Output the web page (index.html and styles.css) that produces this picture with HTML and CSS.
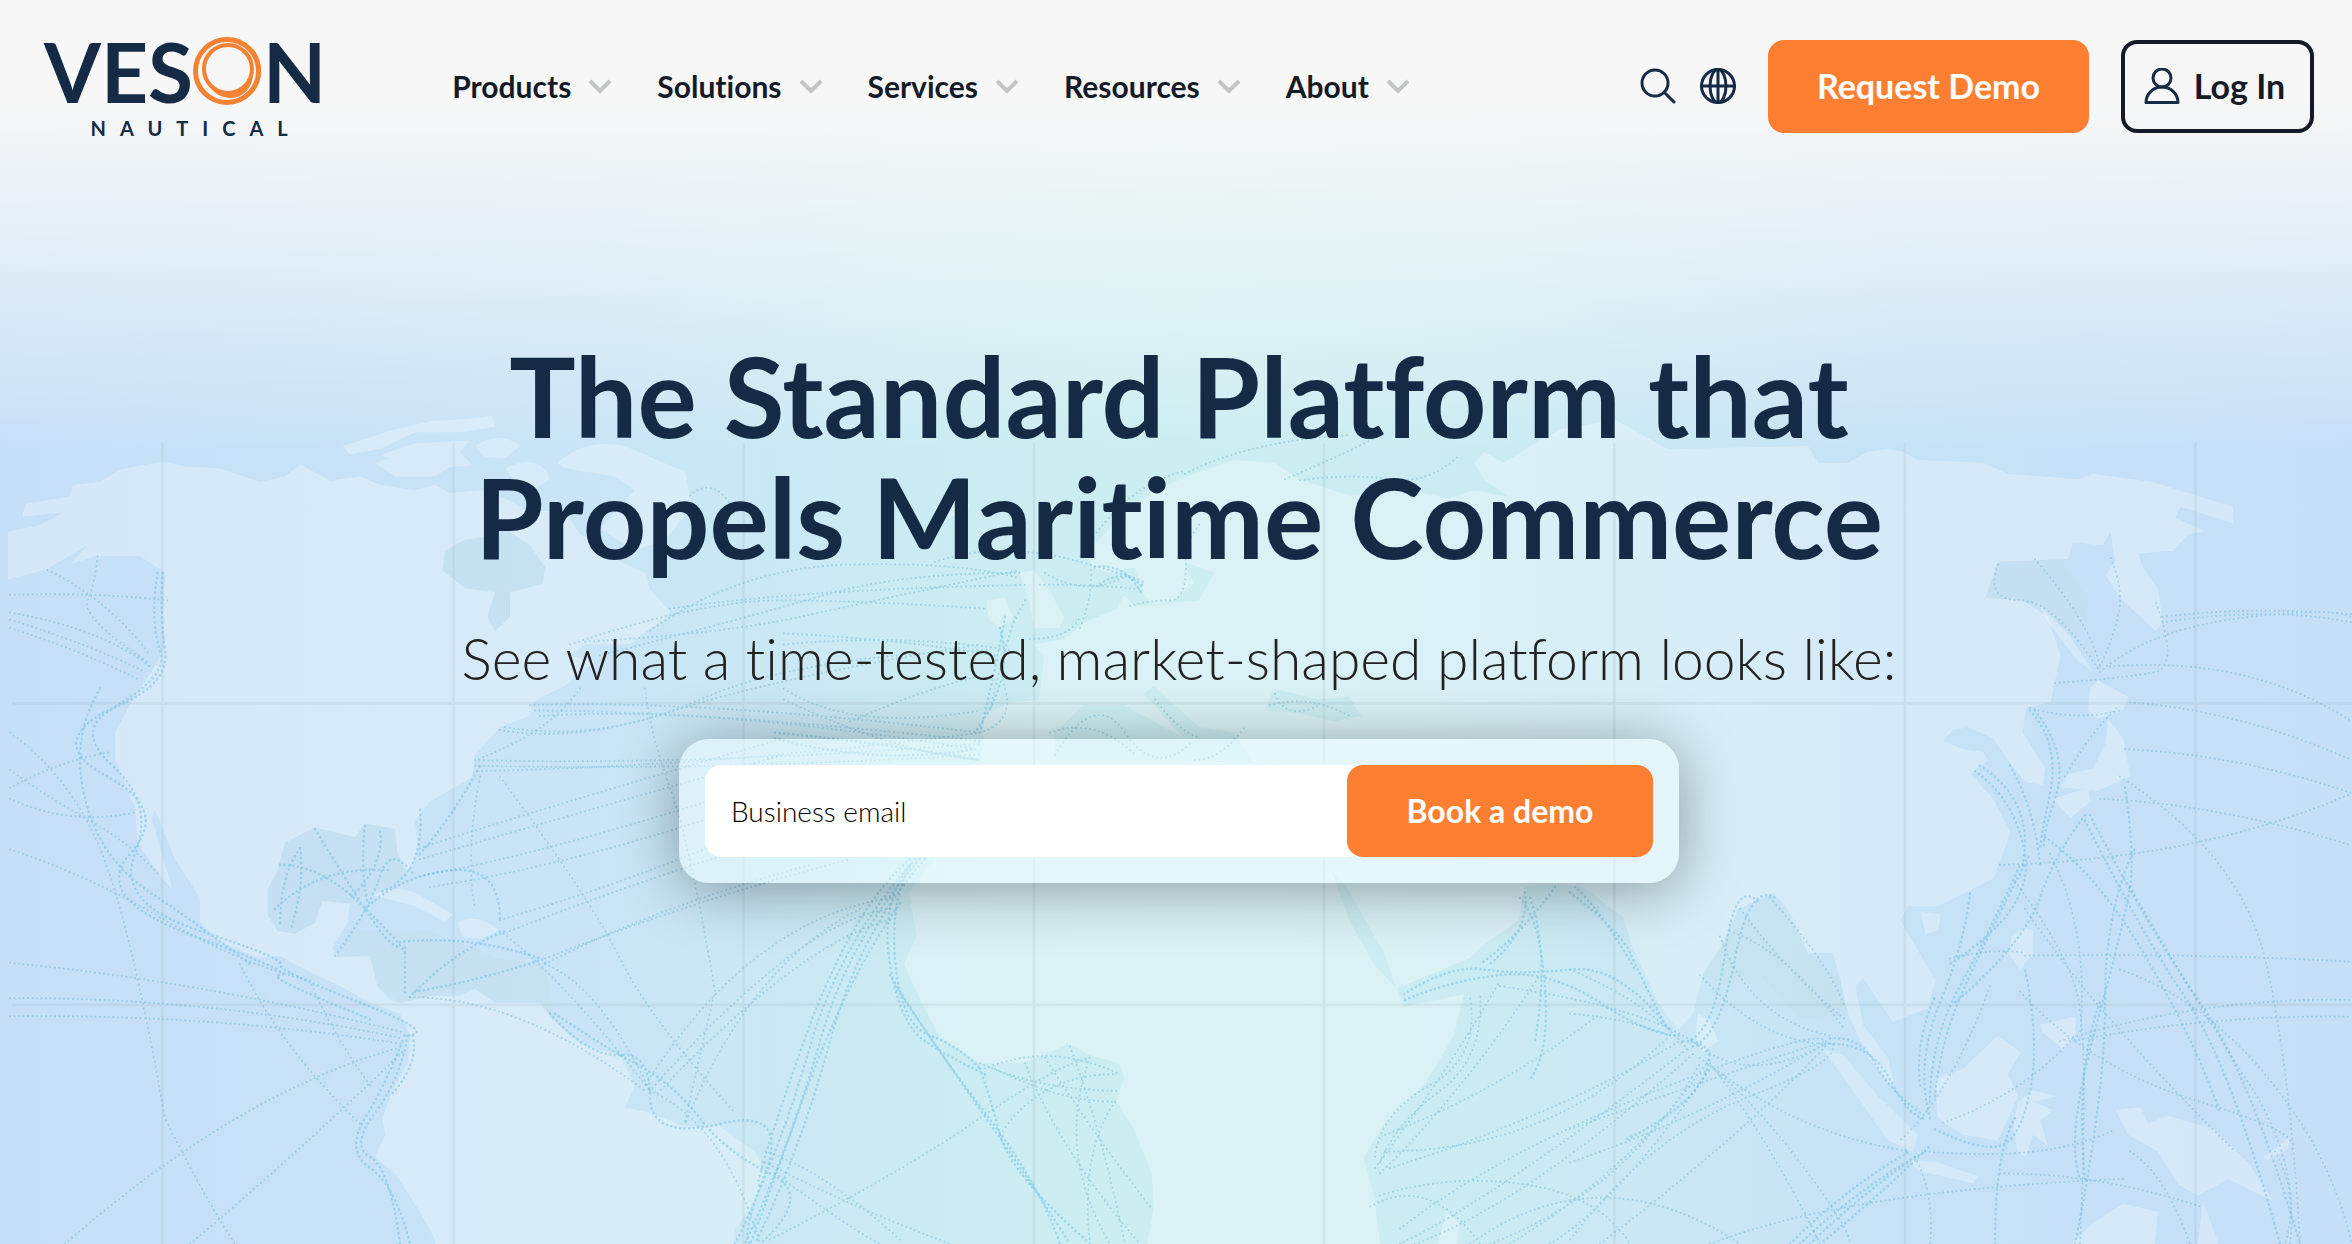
FILE: index.html
```html
<!DOCTYPE html>
<html lang="en">
<head>
  <meta charset="UTF-8">
  <meta name="viewport" content="width=device-width, initial-scale=1">
  <title>Veson Nautical</title>
  <link rel="stylesheet" href="styles.css">
</head>
<body>
  <div class="page">
    <!-- world map with shipping routes -->
    <svg class="map" viewBox="0 0 2352 1244" preserveAspectRatio="xMidYMin slice" aria-hidden="true">
      <g transform="translate(0 380) scale(.5 .551)">
        <path class="land" fill-rule="evenodd" d="M16 275L75 265L130 240L45 248L50 225L138 212L146 190L200 185L240 162L325 148L370 157L440 160L520 185L570 175L600 153L660 183L720 175L760 190L830 200L870 190L900 205L960 200L1010 215L1050 235L1130 240L1160 280L1200 300L1240 330L1290 350L1300 380L1340 420L1330 435L1300 450L1260 480L1170 480L1140 500L1190 510L1130 555L1065 585L1060 610L1000 630L950 680L945 720L860 765L830 800L835 850L818 900L795 860L790 815L730 805L710 830L630 812L570 840L555 890L535 925L535 970L555 1000L590 1005L630 985L645 945L700 950L695 985L665 1030L675 1047L740 1045L755 1100L780 1125L800 1130L860 1118L920 1118L950 1105L990 1130L1080 1130L1110 1165L1160 1205L1240 1225L1270 1280L1250 1320L1300 1330L1370 1355L1440 1355L1510 1400L1530 1440L1510 1490L1470 1540L1462 1600L870 1600L870 1560L840 1510L790 1440L750 1410L770 1370L765 1340L785 1290L815 1240L820 1190L800 1150L740 1130L680 1100L620 1075L560 1045L520 1050L440 1020L400 985L400 940L350 870L310 780L303 795L345 925L320 900L275 840L270 775L230 690L230 640L265 580L310 520L330 480L325 440L330 350L280 320L190 320L140 335L175 300L90 345L16 362Z
          M890 310L930 290L970 285L1000 265L1060 300L1090 340L1085 370L1020 385L1020 430L990 455L975 430L990 385L930 378L885 345Z"/>
        <path class="bay" d="M890 310L930 290L970 285L1000 265L1060 300L1090 340L1085 370L1020 385L1020 430L990 455L975 430L990 385L930 378L885 345Z
          M570 840L630 812L710 830L730 805L790 815L795 860L818 900L740 935L700 950L645 945L630 985L590 1005L555 1000L535 970L535 925L555 890Z
          M700 1000L860 1000L1000 1050L1090 1060L1110 1165L1080 1130L990 1130L950 1105L860 1118L800 1130L755 1100L740 1045L675 1047Z
          M3406 1080L3446 1020L3546 930L3616 1040L3681 1090L3696 1150L3600 1160L3520 1080L3450 1100Z
          M3971 395L3996 330L4120 325L4180 400L4150 470L4096 430L4046 400Z"/>
        <path class="land" d="M745 935Q800 910 850 940L905 970L890 983L830 955ZM915 985Q950 965 1000 998L960 1015L925 1010Z
          M685 120L780 92L860 75L940 70L985 65L990 85L920 95L830 95L760 125L700 135ZM750 150L780 142L760 136L830 115L940 110L920 130L945 155L900 158L870 175L790 175Z
          M950 120Q1000 90 1040 120L1010 142L970 140ZM1010 160Q1080 130 1100 180L1050 210Z
          M1115 150Q1170 105 1250 120L1340 155L1370 165L1385 230L1330 290L1270 310L1200 270L1270 200L1230 175L1130 160Z
          M1868 230L1900 218L1940 225L1930 245L1880 248Z
          M1973 400L2008 395L2028 430L1998 450L1978 435ZM2038 350L2068 345L2098 380L2128 430L2118 450L2068 450L2058 400Z"/>
        <path class="land" fill-rule="evenodd" d="M1968 610L1963 690L1868 870L1818 930L1833 1010L1808 1060L1843 1130L1878 1190L1958 1240L2048 1240L2138 1205L2178 1225L2238 1240L2248 1265L2233 1310L2268 1360L2303 1440L2308 1500L2288 1600L2765 1600L2748 1480L2728 1410L2768 1350L2848 1280L2908 1190L2928 1115L2808 1137L2793 1105L2938 1050L2968 1025L3038 980L3048 920L3108 915L3166 920L3246 975L3266 1030L3316 1130L3356 1180L3386 1150L3406 1080L3446 1020L3476 960L3546 930L3576 960L3616 1040L3666 1040L3681 1090L3696 1150L3736 1230L3791 1290L3776 1230L3726 1170L3711 1100L3726 1085L3786 1165L3856 1140L3871 1090L3826 1020L3801 980L3816 955L3876 955L3986 905L4006 860L4021 820L3986 760L3941 715L3976 690L3966 675L3926 670L3886 655L3906 635L3936 630L3986 650L4016 690L4051 730L4086 735L4091 705L4046 640L4051 595L4101 585L4121 500L4096 430L4046 400L3971 395L3996 330L4136 325L4146 295L4206 300L4221 275L4230 330L4211 355L4246 400L4311 455L4326 440L4316 380L4286 340L4276 315L4346 310L4376 280L4411 275L4351 250L4361 230L4466 260L4466 230L4376 205L4306 185L4186 170L4156 180L4016 170L3966 150L3836 145L3806 130L3776 125L3736 130L3696 150L3636 150L3616 120L3336 125L3230 72L3120 90L3060 120L3008 150L2968 130L2948 150L2968 180L3018 212L2948 200L2898 215L2820 200L2700 210L2598 180L2548 150L2468 145L2388 170L2308 200L2228 260L2178 310L2183 340L2218 350L2268 340L2288 390L2308 410L2348 400L2388 370L2368 330L2428 350L2398 400L2268 410L2248 390L2233 415L2168 440L2128 470L2068 480L2088 500L2078 580L2018 585Z
          M2108 640L2168 590L2248 590L2368 650L2288 570L2308 555L2398 630L2468 640L2508 695L2328 690L2108 690Z
          M2528 600L2548 560L2638 580L2698 575L2723 610L2668 620L2598 605Z
          M2640 866L2693 920L2718 960L2768 1040L2793 1105L2748 1060L2698 980L2663 890Z"/>
        <path class="land" d="M4076 405L4136 460L4186 530L4156 510L4096 440ZM4181 560L4196 545L4256 575L4246 600L4196 615L4176 600Z
          M4216 615L4246 650L4261 720L4196 745L4121 740L4136 715L4186 705L4211 660ZM4106 760L4176 740L4181 765L4141 795Z
          M3841 965L3881 970L3876 1000L3851 1005ZM4026 1005Q4050 990 4066 1000L4066 1040L4041 1070L4016 1040Z
          M4081 1170L4151 1155L4151 1190L4126 1215L4086 1185ZM3396 1150L3421 1165L3436 1200L3406 1220L3391 1190Z
          M3646 1215L3686 1225L3756 1300L3836 1370L3826 1400L3776 1380L3706 1290ZM3816 1415L3876 1420L3956 1445L3946 1458L3836 1435Z
          M3871 1270L3926 1250L3996 1190L4041 1220L4016 1260L4036 1300L3996 1380L3926 1370L3876 1340Z
          M4026 1360L4036 1310L4066 1290L4116 1300L4066 1310L4106 1325L4081 1345L4096 1390L4066 1370L4051 1410L4036 1400Z
          M4231 1325L4281 1320L4296 1350L4336 1335L4426 1360L4496 1420L4546 1490L4456 1450L4396 1480L4356 1460L4316 1400L4256 1370ZM4526 1410L4578 1375L4576 1395L4536 1415Z
          M4106 1600L4186 1530L4246 1495L4316 1510L4306 1600ZM4391 1600L4406 1490L4450 1600ZM2865 1600L2893 1510L2918 1530L2913 1600Z"/>
        <path class="grid" d="M325 115V1600M907 115V1600M1487 115V1600M2068 115V1600M2648 115V1600M3229 115V1600M3810 115V1600M4391 115V1600M24 587H4704M24 1134H4704"/>
        <!-- Pacific, west side -->
        <path class="route" d="M20 390Q180 385 335 400M20 422Q200 450 300 520M20 435Q180 480 290 530M20 450Q160 490 280 545M95 345Q220 400 300 500M195 320Q190 370 175 400T300 515
          M20 740Q120 690 225 675M20 708Q100 760 180 800T320 900M20 640Q140 720 200 850T330 1340Q400 1470 470 1568M20 760Q140 810 270 785M20 852Q180 900 330 980T620 1090
          M20 1058Q400 1090 810 1185M20 1122Q420 1120 805 1195M20 1155Q420 1150 805 1205M130 1568Q480 1290 805 1210M380 1568Q600 1400 810 1215M480 1060Q560 1210 720 1350M620 1090Q660 1180 740 1280"/>
        <path class="route coast" d="M325 350Q320 430 330 490T240 590T225 700T270 860T400 1000T560 1060T720 1130T805 1190M315 350Q300 440 320 490T215 600T215 720T260 860T390 1010T560 1080T740 1160M200 560Q140 650 170 760T300 930T500 1060
          M815 1190Q800 1270 750 1330T740 1410T800 1568M805 1200Q770 1280 730 1340T740 1430T820 1568M825 1190Q840 1240 780 1300"/>
        <!-- Caribbean and Gulf -->
        <path class="route coast" d="M600 850Q560 900 560 990M600 850Q610 920 580 1000M560 880Q640 880 720 950T810 1040M630 815Q680 890 730 960T800 1030M730 810Q720 880 735 950M760 820Q770 880 700 940
          M670 1045Q740 960 760 900T830 900M810 1030V1120M800 1020Q900 1010 1000 1030T1090 1060M730 960Q800 900 900 890T1000 980M840 780Q850 900 760 930M550 960Q640 880 780 890
          M820 1120Q900 1040 1010 1000M830 1110Q960 1090 1090 1050M840 860Q900 800 960 700"/>
        <path class="route" d="M840 850Q1000 800 1568 650M840 870Q1100 800 1568 680M840 900Q1100 860 1568 720M860 920Q1160 880 1568 750M1000 980Q1300 900 1568 790M1020 1000Q1300 900 1568 830M1090 1060Q1300 960 1620 880M1090 1050Q1400 940 1700 870
          M1000 720Q1180 940 1240 1050T1470 1330M960 720Q930 860 950 960M1000 1000Q1120 1080 1300 1290M1090 1060Q1200 1100 1300 1290M820 1120Q1040 1120 1290 1290M1160 560Q1100 640 950 690M1290 560Q1300 640 1340 740T1430 1110Q1380 1300 1370 1350"/>
        <!-- North Atlantic -->
        <path class="route" d="M950 690Q1400 700 1963 660M950 700Q1400 710 1960 680M955 710Q1450 700 1963 640M1000 635Q1150 660 1350 600T1960 480M1010 630Q1200 660 1400 580T1980 490M1060 590Q1400 580 1960 640M1070 600Q1400 600 1960 655M1080 610Q1400 590 1950 670
          M1140 480Q1400 400 1560 400T1970 415M1170 475Q1450 460 1600 430T2040 345M1300 455Q1480 340 1700 335T2040 360M1340 415Q1600 380 2050 372M1200 500Q1500 430 1650 390T2040 350M1568 460Q1800 470 1990 500M1568 480Q1800 460 2020 490M1380 210Q1430 170 1470 240
          M1870 330Q2000 290 2160 330T2280 370M2080 372Q2180 370 2280 380M2090 350Q2180 400 2260 350M2050 400Q1990 500 2010 560T1960 640M2030 430Q2000 520 1980 600M2160 450Q2190 380 2180 330M2060 470Q2140 470 2160 430M2260 410Q2300 400 2340 400T2370 300L2400 260
          M1568 580Q1800 680 1965 690M1568 560Q1700 640 1960 600M1700 620Q1850 560 1950 540M2160 320Q2250 190 2370 165M2370 170Q2500 110 2700 100M2570 180Q2700 130 2760 100M2600 182Q2700 170 2780 180T2920 135"/>
        <path class="route coast" d="M2010 430Q1990 530 1960 640M2000 450Q2030 540 1950 640M1550 640Q1780 660 1960 690M1550 650Q1750 700 1950 670M2190 340Q2250 330 2285 390M2200 370Q2250 340 2285 375"/>
        <!-- South Atlantic -->
        <path class="route coast" d="M1830 870Q1780 930 1790 1050T1860 1190T1960 1250M1820 880Q1760 950 1780 1060T1850 1200T1970 1260M1960 1250Q1980 1300 2000 1370T2180 1568M1780 1080Q1860 1200 1970 1330T2120 1568M1790 1100Q1880 1220 1980 1350T2140 1568
          M1840 870Q1700 1010 1640 1200T1490 1568M1830 870Q1680 1020 1620 1210T1470 1568M1850 870Q1720 1000 1660 1200T1510 1568M1820 870Q1700 960 1600 1220T1520 1460M1800 950Q1690 1090 1600 1320T1500 1568
          M1100 1150Q1180 1230 1240 1225T1300 1300T1440 1350T1530 1440T1500 1568M1110 1150Q1190 1200 1270 1240T1400 1340T1540 1440T1520 1568"/>
        <path class="route" d="M1780 960Q1600 980 1300 1290M1780 980Q1600 1020 1310 1300M1780 940Q1500 980 1290 1280M1720 960Q1500 1060 1370 1350M1300 1290Q1450 1350 1520 1568M1800 1560Q1640 1430 1530 1400M1530 1420Q1700 1500 1900 1568M1550 1440Q1700 1540 1760 1568M1540 1560Q1800 1440 1960 1340T2180 1230
          M1970 1250Q2100 1200 2240 1260M1960 1240Q2080 1290 2240 1290M1990 1250Q2120 1310 2230 1310M2050 1240Q2120 1400 2280 1568M2090 1230Q2180 1360 2300 1500M2140 1210Q2200 1350 2250 1568M2180 1230Q2110 1400 2220 1568M2000 1370Q2080 1260 2230 1260M2230 1310Q2160 1400 2180 1568"/>
        <!-- Mediterranean and Black Sea -->
        <path class="route" d="M2100 640Q2190 610 2270 680M2110 680Q2190 560 2250 640T2380 660M2310 580Q2360 640 2400 650M2390 690Q2440 690 2490 630M2540 590Q2620 570 2700 610M2550 570Q2570 620 2640 590"/>
        <!-- Indian Ocean -->
        <path class="route coast" d="M2808 1115Q2900 1060 2970 1070T3140 1070T3340 1180M2810 1125Q2900 1090 3000 1080T3200 1130T3360 1190M3040 940Q3080 980 3090 1100T3060 1270M3060 940Q3100 1040 3070 1200M3050 930Q3060 1000 2980 1060M3110 920Q3040 1010 2960 1060
          M3376 1200Q3430 1180 3450 1040T3520 950M3386 1210Q3440 1190 3470 1050T3550 940M3140 930Q3240 1000 3260 1040T3330 1170M3150 920Q3200 960 3270 1070M3660 1195Q3720 1190 3750 1240T3840 1330M3650 1205Q3740 1200 3780 1270T3850 1340M3366 1200Q3440 1200 3410 1260T3250 1380"/>
        <path class="route" d="M2750 1410Q2760 1330 2860 1280T2940 1120M2760 1420Q2790 1350 2880 1290T2960 1110M2750 1430Q2900 1250 3000 1090M2760 1440Q2920 1300 3080 1080M2770 1400Q3100 1400 3340 1190M2780 1430Q3100 1340 3360 1200M2770 1370Q3000 1290 3200 1150M2800 1568Q3000 1480 3380 1210M2830 1568Q3060 1490 3390 1220
          M2980 1568Q3260 1470 3400 1240M3020 1568Q3280 1420 3420 1230M3100 1568Q3240 1490 3420 1250M2800 1540Q3000 1400 3340 1280T3650 1210M3140 1360Q3350 1290 3650 1200M3140 1420Q3400 1340 3650 1205M3420 1240Q3540 1380 3640 1568M3400 1230Q3500 1300 3600 1420T3700 1568M3430 1250Q3600 1370 3820 1400
          M3000 1100Q3300 1140 3400 1210T3650 1205M3400 1080Q3520 1200 3650 1205M3440 1010Q3500 1160 3660 1190M3460 1000Q3580 1040 3690 1180M3480 960Q3580 1080 3690 1160M3540 940Q3660 1060 3690 1140M3140 1070Q3300 1130 3380 1220M2940 1568Q3200 1400 3480 1568M2740 1500Q2860 1440 2960 1568M2760 1480Q2900 1440 3050 1460T3260 1568
          M3200 1568Q3500 1360 3660 1200M3420 1568Q3700 1470 4250 1450M3140 1560Q3300 1370 3500 1300T3660 1200M3140 1150Q3260 1160 3340 1190"/>
        <path class="route coast" d="M3600 1568Q3700 1480 3830 1410M3620 1568Q3730 1470 3850 1400M3580 1568Q3700 1460 3820 1400M3640 1568Q3760 1480 3860 1390"/>
        <!-- South China Sea, Japan and West Pacific -->
        <path class="route coast" d="M3860 1340Q3830 1240 3880 1130T3940 930M3860 1310Q3860 1200 3920 1100T4040 880M3870 1300Q3880 1200 3930 1100T4060 860M3840 1280Q3830 1200 3870 1120M3950 710Q4030 760 4050 860T3900 1060M3960 700Q4080 770 4040 900M4020 700Q4070 780 4080 880
          M4060 600Q4120 660 4100 750T4080 850M4070 600Q4140 680 4110 760T4090 850M4170 790Q4110 860 4080 940T3910 1130M4180 790Q4300 1000 4400 1130T4600 1568M4170 800Q4280 1000 4370 1120T4560 1568M4250 740Q4270 860 4260 920T4190 1180T4160 1450M4090 830Q4200 900 4300 1060T4440 1330
          M4150 1568Q4210 1300 4210 1130T4270 850M4170 1450Q4150 1250 4200 1130M3870 1360Q3960 1400 4000 1390T4060 1290T4050 1070M3990 1568Q3990 1400 4030 1340"/>
        <path class="route" d="M3996 335Q3970 400 4040 400T4200 530M4070 325Q4180 440 4200 520M4200 520Q4240 440 4240 400T4220 320M4200 530Q4300 450 4500 430T4704 435M4325 430Q4500 410 4704 425M4325 440Q4540 410 4704 440M4110 550Q4260 540 4310 530T4310 400M4220 520Q4500 500 4704 620M4260 585Q4480 600 4704 690
          M4250 670Q4480 680 4704 750M4060 595Q4150 620 4240 600M4130 720Q4180 640 4240 590M4200 760Q4440 770 4704 845M4000 880Q4400 870 4704 750M4240 720Q4480 860 4530 1050T4600 1568M4050 1045Q4400 1040 4704 1056M4120 1200Q4400 1120 4704 1125M4140 1200Q4440 1150 4704 1156
          M4050 960Q4200 1160 4470 1400M4240 1070Q4400 1120 4530 1260T4704 1568M4030 910Q4120 1020 4150 1100T4160 1568M4100 860Q4180 1000 4160 1190M4260 920Q4400 1140 4500 1280T4580 1568M4040 1110Q4180 1250 4400 1310T4580 1400
          M3900 1050Q3990 1030 4050 1040M3850 1400Q4100 1420 4230 1360M4000 1440Q4200 1440 4400 1500M4260 1400Q4330 1440 4380 1568M4550 1400Q4600 1480 4570 1568M3830 1410Q3870 1480 3860 1568M3980 1100Q3900 1300 3800 1380M4140 1200Q4040 1300 3880 1350"/>
      </g>
    </svg>

    <header class="header">
      <a class="logo" href="#" aria-label="Veson Nautical">
        <span class="logo-name">VES<svg class="logo-ring" viewBox="0 0 70 70" fill="none" stroke="#f58233" aria-hidden="true">
            <circle cx="34" cy="35" r="31.500" stroke-width="5"/>
            <circle cx="35" cy="33" r="24" stroke-width="4"/>
            <path d="M58 10C74 28 70 54 50 64C42 68 33 68 26 66C40 66 52 62 60 50C68 38 67 22 58 10Z" fill="#f58233" stroke="none"/>
            <path d="M14 42C18 56 32 62 44 56C56 50 61 38 57 24C64 40 58 56 44 61C30 65 16 56 14 42Z" fill="#f58233" stroke="none"/>
          </svg>N</span>
        <span class="logo-sub">NAUTICAL</span>
      </a>

      <nav class="nav">
        <button class="nav-item" type="button">Products
          <svg class="chevron" viewBox="0 0 24 16" aria-hidden="true"><path d="M2 3L12 13L22 3"/></svg></button>
        <button class="nav-item" type="button">Solutions
          <svg class="chevron" viewBox="0 0 24 16" aria-hidden="true"><path d="M2 3L12 13L22 3"/></svg></button>
        <button class="nav-item" type="button">Services
          <svg class="chevron" viewBox="0 0 24 16" aria-hidden="true"><path d="M2 3L12 13L22 3"/></svg></button>
        <button class="nav-item" type="button">Resources
          <svg class="chevron" viewBox="0 0 24 16" aria-hidden="true"><path d="M2 3L12 13L22 3"/></svg></button>
        <button class="nav-item" type="button">About
          <svg class="chevron" viewBox="0 0 24 16" aria-hidden="true"><path d="M2 3L12 13L22 3"/></svg></button>
      </nav>

      <div class="actions">
        <button class="icon-btn" type="button" aria-label="Search">
          <svg class="icon" viewBox="0 0 36 36" aria-hidden="true"><circle cx="15" cy="15" r="13"/><path d="M24 24L34 34"/></svg>
        </button>
        <button class="icon-btn" type="button" aria-label="Language">
          <svg class="icon" viewBox="0 0 36 36" aria-hidden="true"><circle cx="18" cy="18" r="16.500"/><ellipse cx="18" cy="18" rx="8" ry="16.500"/><path d="M18 1V35M1 18H35"/></svg>
        </button>
        <a class="btn btn-demo" href="#">Request Demo</a>
        <a class="btn btn-login" href="#">
          <svg class="icon" viewBox="0 0 36 36" aria-hidden="true"><circle cx="18" cy="10" r="9"/><path d="M2 34.500C2 26 9 19 18 19S34 26 34 34.500Z"/></svg>
          Log In</a>
      </div>
    </header>

    <main class="hero">
      <h1>The Standard Platform that<br>Propels Maritime Commerce</h1>
      <p class="lead">See what a time-tested, market-shaped platform looks like:</p>
      <form class="demo-form">
        <input class="email" type="email" placeholder="Business email" aria-label="Business email">
        <button class="btn btn-book" type="submit">Book a demo</button>
      </form>
    </main>
  </div>
</body>
</html>
```
FILE: styles.css
```css
* {
  box-sizing: border-box;
}

body {
  margin: 0;
  font-family: Lato, "Open Sans", sans-serif;
  font-variant-ligatures: none;
  color: #151b26;
}

.page {
  position: relative;
  min-height: 100vh;
  overflow: hidden;
  background:
    linear-gradient(to bottom, #f7f7f7 0, #f7f7f7 100px, rgba(247, 247, 247, 0.55) 260px, rgba(247, 247, 247, 0) 450px),
    linear-gradient(to right, #c5dff7 0%, #c8e4f6 25%, #cbebf3 38%, #cceef1 50%, #cbebf3 64%, #c6e2f6 80%, #c5dff7 100%);
}

.map {
  position: absolute;
  top: 0;
  left: 0;
  width: 100%;
  height: 100%;
}

.land {
  fill: #fff;
  fill-opacity: 0.27;
}

.bay {
  fill: #b9dcdc;
  fill-opacity: 0.16;
}

.grid {
  fill: none;
  stroke: #8f9fa8;
  stroke-opacity: 0.15;
  stroke-width: 5;
}

.route {
  fill: none;
  stroke: #5fb0cc;
  stroke-opacity: 0.42;
  stroke-width: 4;
  stroke-linecap: round;
  stroke-dasharray: 0 9;
}

.coast {
  stroke: #58b4dc;
  stroke-width: 5;
}

/* header */
.header {
  position: relative;
  display: flex;
  align-items: center;
  padding: 29px 38px 0 44px;
}

.logo {
  display: flex;
  flex-direction: column;
  align-items: center;
  color: #152a45;
  text-decoration: none;
}

.logo-name {
  display: flex;
  align-items: center;
  font-size: 82px;
  font-weight: 700;
  line-height: 84px;
}

.logo-ring {
  width: 70px;
  height: 70px;
}

.logo-sub {
  padding-left: 22px;
  font-size: 20px;
  font-weight: 700;
  line-height: 30px;
  letter-spacing: 14px;
}

.nav {
  display: flex;
  gap: 45px;
  margin-left: 126px;
}

.nav-item {
  display: flex;
  align-items: center;
  gap: 17px;
  padding: 0;
  border: 0;
  background: none;
  font: 700 30px/36px Lato, "Open Sans", sans-serif;
  font-variant-ligatures: none;
  color: #151b26;
  cursor: pointer;
}

.chevron {
  width: 24px;
  height: 16px;
  fill: none;
  stroke: #c2c4c6;
  stroke-width: 4;
}

.actions {
  display: flex;
  align-items: center;
  margin-left: auto;
}

.icon-btn {
  display: flex;
  margin-right: 24px;
  padding: 0;
  border: 0;
  background: none;
  cursor: pointer;
}

.icon {
  width: 36px;
  height: 36px;
  fill: none;
  stroke: #152a45;
  stroke-width: 3;
  stroke-linecap: round;
  stroke-linejoin: round;
}

.btn {
  display: flex;
  align-items: center;
  justify-content: center;
  border: 0;
  border-radius: 16px;
  font: 700 32px/40px Lato, "Open Sans", sans-serif;
  text-decoration: none;
  cursor: pointer;
}

.btn-demo {
  width: 321px;
  height: 93px;
  margin: 0 32px 0 8px;
  background: #ff7f32;
  color: #fff;
  font-size: 34px;
}

.btn-login {
  gap: 14px;
  width: 193px;
  height: 93px;
  padding-right: 6px;
  border: 4px solid #151b26;
  color: #151b26;
  font-size: 34px;
}

/* hero */
.hero {
  position: relative;
  display: flex;
  flex-direction: column;
  align-items: center;
  padding: 192px 24px 48px 30px;
  text-align: center;
}

h1 {
  margin: 0;
  font-size: 111px;
  font-weight: 700;
  line-height: 121px;
  color: #152a45;
}

.lead {
  margin: 46px 0;
  font-size: 57px;
  font-weight: 300;
  line-height: 70px;
  color: #222;
}

.demo-form {
  display: flex;
  width: 100%;
  max-width: 1000px;
  padding: 26px;
  border-radius: 30px;
  background: rgba(240, 252, 255, 0.48);
  box-shadow: 0 6px 60px rgba(0, 0, 0, 0.36);
}

.email {
  flex: 1;
  min-width: 0;
  height: 92px;
  margin-right: -16px;
  padding: 0 26px;
  border: 0;
  border-radius: 16px;
  background: #fff;
  font: 300 28px/36px Lato, "Open Sans", sans-serif;
  color: #000;
}

.email::placeholder {
  color: #000;
  opacity: 1;
}

.btn-book {
  width: 306px;
  height: 92px;
  background: #ff7f32;
  color: #fff;
}
```
